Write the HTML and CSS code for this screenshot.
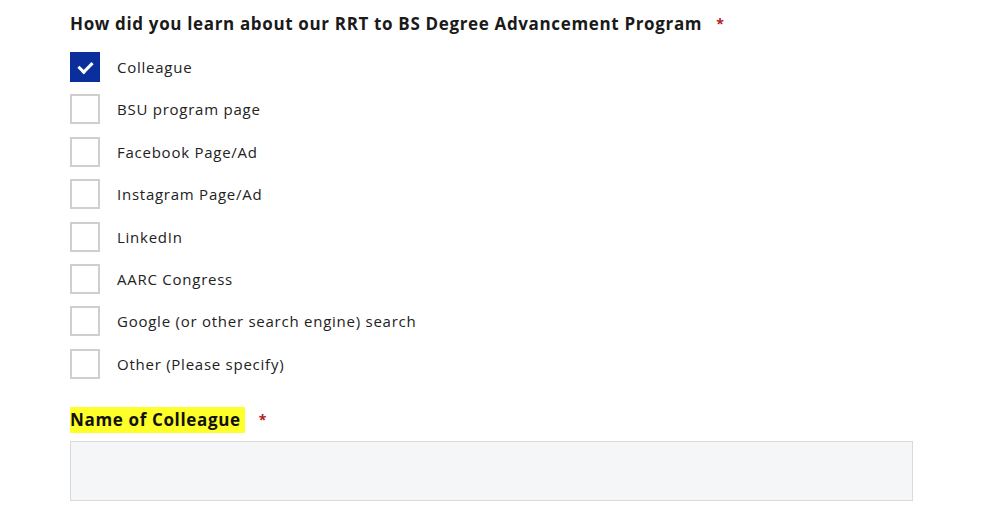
FILE: index.html
```html
<!DOCTYPE html>
<html lang="en">
<head>
    <meta charset="UTF-8">
    <title>RRT to BS</title>
    <link rel="stylesheet" href="styles.css">
</head>
<body>

<form class="skjema">
    <fieldset class="felt">
        <legend class="sporsmal">How did you learn about our RRT to BS Degree Advancement Program <span class="krav">*</span></legend>

        <label class="valg"><input type="checkbox" checked><span class="boks"></span><span class="tekst">Colleague</span></label>
        <label class="valg"><input type="checkbox"><span class="boks"></span><span class="tekst">BSU program page</span></label>
        <label class="valg"><input type="checkbox"><span class="boks"></span><span class="tekst">Facebook Page/Ad</span></label>
        <label class="valg"><input type="checkbox"><span class="boks"></span><span class="tekst">Instagram Page/Ad</span></label>
        <label class="valg"><input type="checkbox"><span class="boks"></span><span class="tekst">LinkedIn</span></label>
        <label class="valg"><input type="checkbox"><span class="boks"></span><span class="tekst">AARC Congress</span></label>
        <label class="valg"><input type="checkbox"><span class="boks"></span><span class="tekst">Google (or other search engine) search</span></label>
        <label class="valg"><input type="checkbox"><span class="boks"></span><span class="tekst">Other (Please specify)</span></label>
    </fieldset>

    <div class="navn">
        <label class="sporsmal" for="kollega"><mark class="gul">Name of Colleague</mark> <span class="krav">*</span></label>
        <input id="kollega" class="inndata" type="text">
    </div>
</form>

</body>
</html>
```

FILE: styles.css
```css
body {
    margin: 0;
    background-color: white;
    font-family: "Open Sans", "Liberation Sans", sans-serif;
    color: #222;
}
.skjema {
    padding: 12px 71px 0 70px;
}
.felt {
    border: none;
    margin: 0;
    padding: 0;
}
.sporsmal {
    padding: 0;
    font-size: 17px;
    font-weight: 700;
    color: #1a1a1a;
    letter-spacing: 0.65px;
    line-height: 24px;
}
.krav {
    color: #b01c1c;
    font-size: 14px;
    margin-left: 9px;
    vertical-align: top;
}
.felt .sporsmal {
    margin-bottom: 16px;
}
.valg {
    display: flex;
    align-items: center;
    height: 30px;
    margin-bottom: 12.4px;
    cursor: pointer;
}
.valg input {
    display: none;
}
.boks {
    width: 26px;
    height: 26px;
    border: 2px solid #cfcfcf;
    flex-shrink: 0;
    position: relative;
}
.valg input:checked + .boks {
    background-color: #0a2f9c;
    border-color: #0a2f9c;
}
/*haken i den valgte boksen*/
.valg input:checked + .boks::after {
    content: "";
    position: absolute;
    left: 9px;
    top: 5px;
    width: 6px;
    height: 11px;
    border-right: 3px solid white;
    border-bottom: 3px solid white;
    transform: rotate(45deg);
}
.tekst {
    margin-left: 17px;
    font-size: 15px;
    letter-spacing: 0.75px;
    color: #222;
}
.navn {
    margin-top: 17px;
}
.navn .sporsmal {
    display: block;
    margin-bottom: 9px;
}
.gul {
    background-color: #ffff2a;
    color: #111;
    padding: 1px 4px 2px 0;
}
.inndata {
    display: block;
    box-sizing: border-box;
    width: 843px;
    height: 60px;
    margin: 0;
    background-color: #f5f6f8;
    border: 1px solid #d9d9d9;
}
```
